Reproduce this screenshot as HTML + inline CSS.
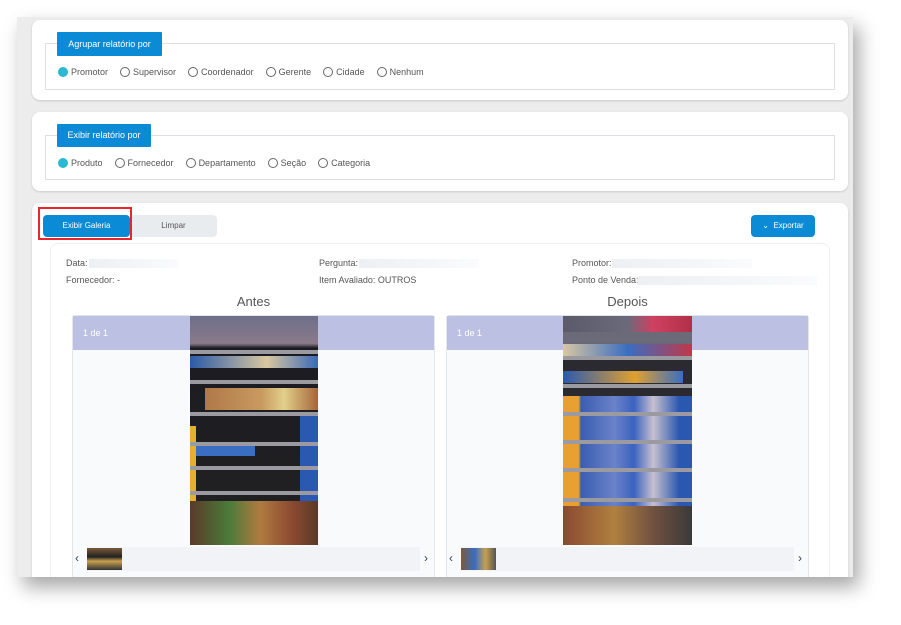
<!DOCTYPE html>
<html><head><meta charset="utf-8"><style>
*{box-sizing:border-box;margin:0;padding:0}
body{width:901px;height:625px;background:#fff;position:relative;overflow:hidden;font-family:"Liberation Sans",sans-serif;}
.a{position:absolute}
#frame{left:17px;top:17px;width:836px;height:560px;background:#ececec;box-shadow:6px 10px 18px rgba(0,0,0,.35);overflow:hidden}
.card{background:#fff;border-radius:8px;box-shadow:0 1px 2px rgba(0,0,0,.15)}
.fs{border:1px solid #dcdfe3}
.leg{background:#0b8ad6;color:#fff;font-size:9px;line-height:24px;text-align:center;border-radius:1px}
.rad{font-size:9px;color:#555;display:flex;align-items:center;white-space:nowrap}
.rad i{display:inline-block;width:10px;height:10px;border:1px solid #666;border-radius:50%;margin:0 3px 0 12px}
.rad i:first-child{margin-left:6px}
.rad i.on{background:#2bb8d3;border-color:#2bb8d3}
.btn{font-size:8px;text-align:center;line-height:22px;border-radius:4px}
.lbl{font-size:9px;color:#555}
.blur{background:linear-gradient(90deg,rgba(225,228,235,.6),rgba(240,242,246,.3));height:9px}
.pan{background:#f9fafc;border:1px solid #e3e6ea;border-radius:3px}
.hd{background:#bcc0e2;color:#fff;font-size:9px}
.shelf{background:#9a9aa0;height:4px}
</style></head><body>
<div id="frame" class="a">
 <div class="a card" style="left:15px;top:3px;width:816px;height:80px"></div>
 <div class="a fs" style="left:28px;top:26px;width:790px;height:47px"></div>
 <div class="a leg" style="left:40px;top:15px;width:105px">Agrupar relatório por</div>
 <div class="a rad" style="left:35px;top:50px"><i class="on"></i>Promotor<i></i>Supervisor<i></i>Coordenador<i></i>Gerente<i></i>Cidade<i></i>Nenhum</div>
 <div class="a card" style="left:15px;top:95px;width:816px;height:79px"></div>
 <div class="a fs" style="left:28px;top:118px;width:790px;height:45px"></div>
 <div class="a leg" style="left:40px;top:107px;width:94px;height:23px;line-height:23px">Exibir relatório por</div>
 <div class="a rad" style="left:35px;top:141px"><i class="on"></i>Produto<i></i>Fornecedor<i></i>Departamento<i></i>Seção<i></i>Categoria</div>
 <div class="a card" style="left:15px;top:186px;width:816px;height:400px"></div>
 <div class="a btn" style="left:113px;top:198px;width:87px;height:22px;background:#e9ecef;color:#555">Limpar</div>
 <div class="a btn" style="left:26px;top:198px;width:87px;height:22px;background:#0b8ad6;color:#fff">Exibir Galeria</div>
 <div class="a" style="left:21px;top:190px;width:94px;height:33px;border:2px solid #e8262b"></div>
 <div class="a btn" style="left:734px;top:198px;width:64px;height:22px;background:#0b8ad6;color:#fff">⌄&nbsp; Exportar</div>
 <div class="a" style="left:33px;top:226px;width:780px;height:360px;border:1px solid #eceef1;border-radius:8px;background:#fff"></div>
 <div class="a lbl" style="left:49px;top:241px">Data:</div><div class="a blur" style="left:72px;top:242px;width:90px"></div>
 <div class="a lbl" style="left:302px;top:241px">Pergunta:</div><div class="a blur" style="left:342px;top:242px;width:120px"></div>
 <div class="a lbl" style="left:555px;top:241px">Promotor:</div><div class="a blur" style="left:595px;top:242px;width:140px"></div>
 <div class="a lbl" style="left:49px;top:258px">Fornecedor: -</div>
 <div class="a lbl" style="left:302px;top:258px">Item Avaliado: OUTROS</div>
 <div class="a lbl" style="left:555px;top:258px">Ponto de Venda:</div><div class="a blur" style="left:620px;top:259px;width:180px"></div>
 <div class="a" style="left:55px;top:277px;width:363px;text-align:center;font-size:13px;color:#555">Antes</div>
 <div class="a" style="left:429px;top:277px;width:363px;text-align:center;font-size:13px;color:#555">Depois</div>
 <div class="a pan" style="left:55px;top:298px;width:363px;height:270px"></div>
 <div class="a hd" style="left:56px;top:299px;width:361px;height:34px;line-height:34px;padding-left:10px">1 de 1</div>
 <div class="a" style="left:173px;top:299px;width:128px;height:229px;background:linear-gradient(#6d6f8a 0,#8a7a8a 12%,#1b1b22 14%,#222 100%);overflow:hidden">
  <div class="a" style="left:0;top:40px;width:128px;height:12px;background:linear-gradient(90deg,#2a5aa8,#d9c7a0 60%,#3b69b8)"></div>
  <div class="a" style="left:15px;top:72px;width:113px;height:22px;background:linear-gradient(90deg,#b07848,#c89a60 50%,#e2d08a 70%,#a5643a)"></div>
  <div class="a" style="left:5px;top:128px;width:60px;height:12px;background:#3a6ec2"></div>
  <div class="a" style="left:0;top:110px;width:6px;height:110px;background:#e5b030"></div>
  <div class="a" style="left:110px;top:100px;width:18px;height:90px;background:#2c59b0"></div>
  <div class="a" style="left:0;top:185px;width:128px;height:44px;background:linear-gradient(90deg,#5a3a28,#4a7a3a 30%,#b07a40 55%,#8a4a30 80%,#5a3a28)"></div>
  <div class="a shelf" style="left:0;top:34px;width:128px"></div>
  <div class="a shelf" style="left:0;top:64px;width:128px"></div>
  <div class="a shelf" style="left:0;top:96px;width:128px"></div>
  <div class="a shelf" style="left:0;top:126px;width:128px"></div>
  <div class="a shelf" style="left:0;top:150px;width:128px"></div>
  <div class="a shelf" style="left:0;top:175px;width:128px"></div>
 </div>
 <div class="a" style="left:70px;top:530px;width:333px;height:24px;background:#f1f3f6"></div>
 <div class="a" style="left:70px;top:531px;width:35px;height:22px;background:linear-gradient(#7a5a3a,#222 40%,#c8a050 60%,#333)"></div>
 <div class="a" style="left:58px;top:534px;font-size:12px;color:#345">‹</div>
 <div class="a" style="left:407px;top:534px;font-size:12px;color:#345">›</div>
 <div class="a pan" style="left:429px;top:298px;width:363px;height:270px"></div>
 <div class="a hd" style="left:430px;top:299px;width:361px;height:34px;line-height:34px;padding-left:10px">1 de 1</div>
 <div class="a" style="left:546px;top:299px;width:129px;height:229px;background:linear-gradient(#6a6a78 0,#6a6a78 12%,#2a2a30 14%,#2a2a30 100%);overflow:hidden">
  <div class="a" style="left:0;top:28px;width:129px;height:12px;background:linear-gradient(90deg,#d9c7a0,#3a6ec2 50%,#c03848)"></div>
  <div class="a" style="left:0;top:0;width:129px;height:16px;background:linear-gradient(90deg,#5a5a6a,#6a6a7a 50%,#d04060 70%,#b03048)"></div>
  <div class="a" style="left:0;top:55px;width:120px;height:12px;background:linear-gradient(90deg,#2a5ab0,#e0a030 60%,#3a6ec2)"></div>
  <div class="a" style="left:0;top:80px;width:129px;height:110px;background:linear-gradient(90deg,#e8a030 0,#e8a030 12%,#3a5eb0 14%,#6a82c8 40%,#3a62c0 55%,#c8c0d0 70%,#2a58b0 90%)"></div>
  <div class="a" style="left:0;top:190px;width:129px;height:39px;background:linear-gradient(90deg,#8a4a30,#b08040 40%,#705040 70%,#3a3a3a)"></div>
  <div class="a shelf" style="left:0;top:40px;width:129px"></div>
  <div class="a shelf" style="left:0;top:68px;width:129px"></div>
  <div class="a shelf" style="left:0;top:96px;width:129px"></div>
  <div class="a shelf" style="left:0;top:124px;width:129px"></div>
  <div class="a shelf" style="left:0;top:152px;width:129px"></div>
  <div class="a shelf" style="left:0;top:182px;width:129px"></div>
 </div>
 <div class="a" style="left:444px;top:530px;width:333px;height:24px;background:#f1f3f6"></div>
 <div class="a" style="left:444px;top:531px;width:35px;height:22px;background:linear-gradient(90deg,#7a5a3a,#3a6ec2 40%,#c8a050 70%,#555)"></div>
 <div class="a" style="left:432px;top:534px;font-size:12px;color:#345">‹</div>
 <div class="a" style="left:781px;top:534px;font-size:12px;color:#345">›</div>
</div>
</body></html>
